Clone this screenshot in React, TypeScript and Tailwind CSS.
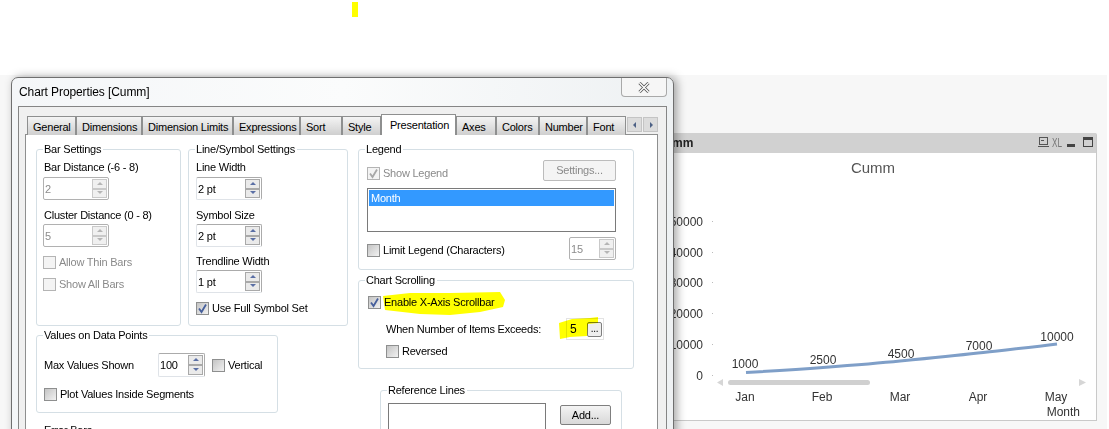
import React from 'react';

const tabs = [
  { label: 'General', w: 'w-[49px]' },
  { label: 'Dimensions', w: 'w-[66px]' },
  { label: 'Dimension Limits', w: 'w-[91px]' },
  { label: 'Expressions', w: 'w-[67px]' },
  { label: 'Sort', w: 'w-[42px]' },
  { label: 'Style', w: 'w-[39px]' },
  { label: 'Presentation', w: 'w-[75px]', active: true },
  { label: 'Axes', w: 'w-[40px]' },
  { label: 'Colors', w: 'w-[43px]' },
  { label: 'Number', w: 'w-[48px]' },
  { label: 'Font', w: 'w-[39px]' },
];

function Arrow({ dir, color }: { dir: 'up' | 'down' | 'left' | 'right'; color: string }) {
  const pts = {
    up: '0,4 3,1 6,4',
    down: '0,1 6,1 3,4',
    left: '4,0 4,6 1,3',
    right: '2,0 2,6 5,3',
  }[dir];
  return (
    <svg width="6" height="6" viewBox="0 0 6 6" className="block">
      <polygon points={pts} fill={color} />
    </svg>
  );
}

function Spinner({ value, w, h, disabled }: { value: string; w: string; h: string; disabled?: boolean }) {
  const arrow = disabled ? '#b5b5b5' : '#5a6fa5';
  const btn = `flex flex-1 items-center justify-center border ${
    disabled ? 'border-[#c9c9c9] bg-[#f0f0f0]' : 'border-[#a9a9a9] bg-[#eaeaea]'
  }`;
  return (
    <div
      className={`flex ${w} ${h} items-stretch rounded-[2px] border ${
        disabled ? 'border-[#b1b1b1]' : 'border-[#dfe3e8] border-r-[#ababab] border-t-[#ababab]'
      } bg-white pl-[1px] pr-[1px]`}
    >
      <span className={`flex-1 pt-[3px] ${disabled ? 'text-[#8c8c8c]' : 'text-black'}`}>{value}</span>
      <div className="flex w-[15px] flex-col py-[1px]">
        <div className={btn}>
          <Arrow dir="up" color={arrow} />
        </div>
        <div className={btn}>
          <Arrow dir="down" color={arrow} />
        </div>
      </div>
    </div>
  );
}

function Check({ label, checked, disabled }: { label: string; checked?: boolean; disabled?: boolean }) {
  return (
    <div className={`flex h-[13px] items-center gap-[3px] ${disabled ? 'text-[#8a8a8a]' : 'text-black'}`}>
      <span
        className={`flex h-[13px] w-[13px] shrink-0 items-center justify-center border ${
          disabled
            ? 'border-[#b4b4b4] bg-[#f4f4f4]'
            : 'border-[#8e8f8f] bg-gradient-to-br from-[#c4c4c4] to-[#f2f2f2]'
        }`}
      >
        {checked && (
          <svg width="11" height="11" viewBox="0 0 11 11">
            <path
              d="M2 5.5 L4.5 9 L9 1.5"
              fill="none"
              stroke={disabled ? '#a8a8a8' : '#47609c'}
              strokeWidth="1.8"
            />
          </svg>
        )}
      </span>
      <span className="whitespace-nowrap">{label}</span>
    </div>
  );
}

function Group({ title, className, children }: { title: string; className: string; children?: React.ReactNode }) {
  return (
    <div className={`relative shrink-0 rounded-[3px] border border-[#d5dfe5] ${className}`}>
      <span className="absolute left-[6px] top-[-7px] bg-white pl-[1px] pr-[2px] leading-[13px] whitespace-nowrap">
        {title}
      </span>
      {children}
    </div>
  );
}

function ChartPanel() {
  const yLabels = [
    ['50000', 226],
    ['40000', 257],
    ['30000', 287],
    ['20000', 318],
    ['10000', 349],
    ['0', 380],
  ] as const;
  const values = [
    ['1000', 745, 368],
    ['2500', 823, 364],
    ['4500', 901, 358],
    ['7000', 979, 350],
    ['10000', 1057, 341],
  ] as const;
  const months = [
    ['Jan', 745],
    ['Feb', 822],
    ['Mar', 900],
    ['Apr', 978],
    ['May', 1056],
  ] as const;
  return (
    <div className="absolute left-[650px] top-[133px] flex h-[288px] w-[447px] flex-col rounded-t-[2px] border-b border-r border-[#c9c9c9] bg-white font-['Liberation_Sans',sans-serif]">
      <div className="flex h-[20px] shrink-0 items-center justify-between bg-[#d1d1d1] pl-[6px] text-[12px] font-bold text-[#222]">
        <span>Cumm</span>
        <svg width="58" height="20" viewBox="1038 133 58 20" className="block">
          <rect x="1039.5" y="137.5" width="8" height="7" fill="none" stroke="#555" />
          <path d="M1041 140.5h3M1038 146.5h11" stroke="#555" />
          <text x="1052" y="147" fontSize="12" fontWeight="400" fill="#777" textLength="10" lengthAdjust="spacingAndGlyphs">
            XL
          </text>
          <rect x="1067" y="144" width="8" height="3" fill="#444" />
          <rect x="1083.5" y="137.5" width="9" height="9" fill="none" stroke="#444" />
          <rect x="1083" y="137" width="10" height="3" fill="#444" />
        </svg>
      </div>
      <svg viewBox="650 153 446 267" className="block h-[267px] w-[446px]">
        <text x="873" y="173" fontSize="15" fill="#555" textAnchor="middle">
          Cumm
        </text>
        {yLabels.map(([t, y]) => (
          <g key={t}>
            <text x="703" y={y} fontSize="12" fill="#333" textAnchor="end">
              {t}
            </text>
            <rect x="712" y={y - 5} width="1" height="1" fill="#bbb" />
          </g>
        ))}
        <path
          d="M746 372.5 C 772 371, 797 369.5, 823 367.5 C 849 365.5, 875 363.5, 900 361 C 926 358.5, 952 356, 978 353 C 1004 350, 1030 347.5, 1057 344"
          fill="none"
          stroke="#7f9fc8"
          strokeWidth="3"
        />
        {values.map(([t, x, y]) => (
          <text key={t} x={x} y={y} fontSize="12" fill="#333" textAnchor="middle">
            {t}
          </text>
        ))}
        <polygon points="723,379 723,386 717,382.5" fill="#d6d6d6" />
        <rect x="728" y="380" width="142" height="5" rx="2.5" fill="#d0d0d0" />
        <polygon points="1079,379 1079,386 1086,382.5" fill="#d6d6d6" />
        {months.map(([t, x]) => (
          <text key={t} x={x} y="401" fontSize="12" fill="#333" textAnchor="middle">
            {t}
          </text>
        ))}
        <text x="1080" y="416" fontSize="12" fill="#333" textAnchor="end">
          Month
        </text>
      </svg>
    </div>
  );
}

function Dialog() {
  return (
    <div className="absolute left-[11px] top-[77px] h-[380px] w-[663px] rounded-t-[7px] border border-[#6f6f6f] bg-gradient-to-r from-[#f4f6f8] via-[#fbfcfc] to-[#eef1f3] px-[6px] text-[11px] tracking-[-0.22px] text-black font-['Liberation_Sans',sans-serif] shadow-[3px_0_10px_rgba(0,0,0,0.35)]">
      {/* Title bar */}
      <div className="flex h-[28px] items-start justify-between">
        <span className="pl-[1px] pt-[7px] text-[12px] leading-[14px] tracking-[-0.1px]">Chart Properties [Cumm]</span>
        <button className="flex h-[19px] w-[46px] items-center justify-center rounded-b-[4px] border border-t-0 border-[#a9a9a9] bg-[#f6f6f6]">
          <svg width="12" height="11" viewBox="0 0 12 11">
            <path d="M1.5 1 L10.5 10 M10.5 1 L1.5 10" stroke="#555" strokeWidth="3" />
            <path d="M1.5 1 L10.5 10 M10.5 1 L1.5 10" stroke="#fff" strokeWidth="1.4" />
          </svg>
        </button>
      </div>

      <div className="h-[340px] border border-[#858585] bg-[#f0f0f0] pl-[6px] pr-[8px] pt-[9px]">
        {/* Tabs */}
        <div className="relative z-10 -mb-px flex h-[19px] items-end pl-[2px]">
          {tabs.map((tab) => (
            <div
              key={tab.label}
              className={`${tab.w} shrink-0 whitespace-nowrap border border-b-0 border-[#8e8f8f] ${
                tab.active
                  ? 'h-[21px] bg-white pl-[8px] pt-[2px]'
                  : 'h-[19px] bg-gradient-to-b from-[#f4f4f4] to-[#cfcfcf] pl-[5px] pt-[2px]'
              }`}
            >
              {tab.label}
            </div>
          ))}
          <div className="mb-[3px] ml-[1px] flex gap-[1px]">
            <div className="flex h-[15px] w-[15px] items-center justify-center border border-[#c4c4c4] bg-[#dcdcdc]">
              <Arrow dir="left" color="#4d6185" />
            </div>
            <div className="flex h-[15px] w-[15px] items-center justify-center border border-[#c4c4c4] bg-[#dcdcdc]">
              <Arrow dir="right" color="#4d6185" />
            </div>
          </div>
        </div>

        {/* Page */}
        <div className="flex h-[300px] border border-[#8e8f8f] bg-white pl-[10px] pt-[14px]">
          <div className="w-[312px] shrink-0">
            <div className="flex gap-[7px]">
              <Group title="Bar Settings" className="h-[177px] w-[145px] pl-[7px] pt-[10px]">
                <div className="leading-[14px]">Bar Distance (-6 - 8)</div>
                <div className="-ml-px mt-[3px]">
                  <Spinner value="2" w="w-[66px]" h="h-[23px]" disabled />
                </div>
                <div className="mt-[8px] leading-[14px]">Cluster Distance (0 - 8)</div>
                <div className="-ml-px mt-[2px]">
                  <Spinner value="5" w="w-[66px]" h="h-[23px]" disabled />
                </div>
                <div className="-ml-px mt-[9px]">
                  <Check label="Allow Thin Bars" disabled />
                </div>
                <div className="-ml-px mt-[9px]">
                  <Check label="Show All Bars" disabled />
                </div>
              </Group>
              <Group title="Line/Symbol Settings" className="h-[177px] w-[160px] pl-[7px] pt-[10px]">
                <div className="leading-[14px]">Line Width</div>
                <div className="mt-[3px]">
                  <Spinner value="2 pt" w="w-[66px]" h="h-[23px]" />
                </div>
                <div className="mt-[8px] leading-[14px]">Symbol Size</div>
                <div className="mt-[2px]">
                  <Spinner value="2 pt" w="w-[66px]" h="h-[23px]" />
                </div>
                <div className="mt-[7px] leading-[14px]">Trendline Width</div>
                <div className="mt-[2px]">
                  <Spinner value="1 pt" w="w-[66px]" h="h-[23px]" />
                </div>
                <div className="mt-[9px]">
                  <Check label="Use Full Symbol Set" checked />
                </div>
              </Group>
            </div>
            <Group title="Values on Data Points" className="mt-[9px] h-[78px] w-[242px] pl-[7px] pt-[17px]">
              <div className="flex items-center">
                <span className="w-[114px]">Max Values Shown</span>
                <Spinner value="100" w="w-[47px]" h="h-[24px]" />
                <div className="ml-[7px]">
                  <Check label="Vertical" />
                </div>
              </div>
              <div className="mt-[11px]">
                <Check label="Plot Values Inside Segments" />
              </div>
            </Group>
            <div className="mt-[10px] pl-[8px] leading-[14px]">Error Bars</div>
          </div>

          <div className="ml-[10px] w-[276px] shrink-0">
            <Group title="Legend" className="h-[121px] w-[276px] pl-[8px] pr-[17px] pt-[10px]">
              <div className="flex items-start justify-between">
                <div className="mt-[7px]">
                  <Check label="Show Legend" checked disabled />
                </div>
                <button className="h-[21px] w-[73px] rounded-[2px] border border-[#bcbcbc] bg-[#f4f4f4] text-[11px] text-[#8a8a8a]">
                  Settings...
                </button>
              </div>
              <div className="mt-[7px] h-[44px] w-[249px] border border-[#7a7a7a] p-[1px]">
                <div className="h-[16px] bg-[#3399ff] pl-[2px] leading-[16px] text-white">Month</div>
              </div>
              <div className="mt-[5px] flex items-center justify-between">
                <div className="pt-[4px]">
                  <Check label="Limit Legend (Characters)" />
                </div>
                <Spinner value="15" w="w-[47px]" h="h-[23px]" disabled />
              </div>
            </Group>

            <Group title="Chart Scrolling" className="mt-[10px] h-[89px] w-[276px] pl-[9px] pt-[15px]">
              <Check label="Enable X-Axis Scrollbar" checked />
              <div className="ml-[18px] mt-[9px] flex h-[22px] items-center">
                <span className="w-[180px]">When Number of Items Exceeds:</span>
                <div className="flex h-[22px] w-[38px] items-center justify-between border border-[#e3e3e3] pl-[3px] pr-[1px]">
                  <span className="text-[12px]">5</span>
                  <button className="h-[15px] w-[15px] rounded-[2px] border border-[#7f7f7f] bg-[#eeeeee] text-[10px] leading-[12px]">
                    ...
                  </button>
                </div>
              </div>
              <div className="ml-[18px] mt-[5px]">
                <Check label="Reversed" />
              </div>
            </Group>

            <Group title="Reference Lines" className="ml-[22px] mt-[21px] h-[60px] w-[242px] pl-[7px] pt-[12px]">
              <div className="flex items-start">
                <div className="h-[40px] w-[158px] border border-[#7a7a7a]" />
                <button className="ml-[14px] mt-[2px] h-[20px] w-[51px] rounded-[2px] border border-[#7f7f7f] bg-gradient-to-b from-[#f4f4f4] to-[#d8d8d8] text-[11px]">
                  Add...
                </button>
              </div>
            </Group>
          </div>
        </div>
      </div>
    </div>
  );
}

export default function App() {
  return (
    <div className="relative h-[429px] w-[1109px] overflow-hidden bg-white">
      <div className="absolute left-0 top-[75px] h-[354px] w-[1107px] bg-[#f7f7f7]" />
      <ChartPanel />
      <Dialog />
      {/* highlighter marks */}
      <svg viewBox="0 0 1109 429" className="pointer-events-none absolute left-0 top-0 h-[429px] w-[1109px] mix-blend-multiply">
        <rect x="352" y="2" width="6" height="15" fill="#ffff00" />
        <path d="M383 296 L410 293 L450 293 L500 292 L505 300 L503 307 L480 312 L450 315 L420 314 L385 310 Z" fill="#ffff00" />
        <path d="M559 323 L572 319 L590 318 L598 317 L598 323 L588 324 L587 336 L570 337 L560 339 Z" fill="#ffff00" />
      </svg>
    </div>
  );
}
